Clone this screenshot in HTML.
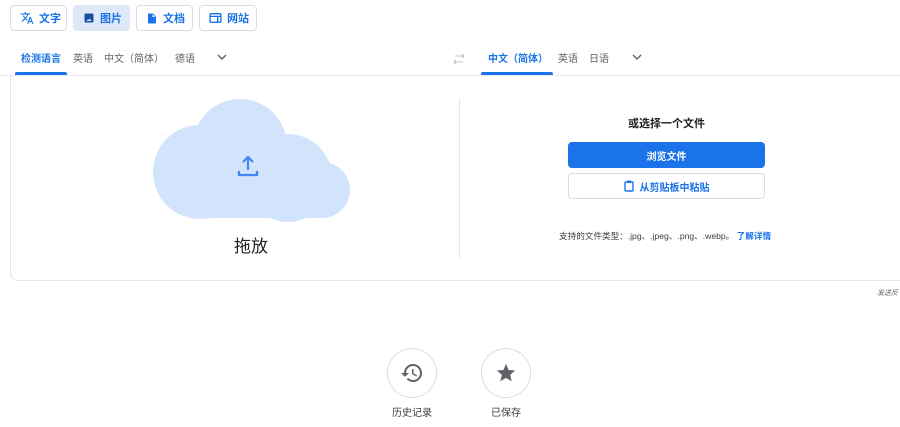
<!DOCTYPE html>
<html><head><meta charset="utf-8"><style>
*{box-sizing:border-box;margin:0;padding:0}
body{width:900px;height:427px;overflow:hidden;background:#fff;font-family:"Liberation Sans","Noto Sans CJK SC",sans-serif;color:#3c4043;position:relative}
.btn{position:absolute;top:5px;height:26px;border:1px solid #dadce0;border-radius:4px;font-size:11px;color:#1a73e8;display:flex;align-items:center;padding-left:9px;gap:5px;font-weight:bold}
.btn.sel{background:#dde8f9;border-color:#dde8f9}
.tab{position:absolute;top:50px;font-size:10px;color:#5f6368}
.abs{position:absolute}
</style></head><body>
<div class="btn" style="left:10px;width:57px"><svg width="14" height="14" viewBox="0 0 24 24"><path fill="#1a73e8" d="M12.9 15.1l-2.5-2.5v0c1.7-1.9 3-4.1 3.7-6.5H17V4h-7V2H8v2H1v2h11.2c-.7 1.9-1.7 3.8-3.2 5.3-1-1.1-1.8-2.3-2.4-3.6h-2c.7 1.6 1.7 3.200 3 4.6L2.6 17.3 4 18.7l5-5 3.1 3.1.8-1.7zM18.5 10h-2L12 22h2l1.1-3h4.8l1.1 3h2l-4.5-12zm-2.6 7l1.6-4.3 1.6 4.3h-3.2z"/></svg>文字</div>
<div class="btn sel" style="left:73px;width:57px"><svg width="12" height="12" viewBox="0 0 24 24"><path fill="#1a4f9e" d="M21 19V5c0-1.1-.9-2-2-2H5c-1.1 0-2 .9-2 2v14c0 1.1.9 2 2 2h14c1.1 0 2-.9 2-2zM8 15l2 2 3-4 4 5H7z"/></svg>图片</div>
<div class="btn" style="left:136px;width:57px"><svg width="12" height="13" viewBox="0 0 24 24"><path fill="#1a73e8" d="M14 2H6c-1.1 0-2 .9-2 2v16c0 1.1.9 2 2 2h12c1.1 0 2-.9 2-2V8l-6-6zm-1 7V3.5L18.5 9H13z"/></svg>文档</div>
<div class="btn" style="left:199px;width:58px"><svg width="13" height="12" viewBox="0 0 24 22"><rect x="2" y="3" width="20" height="16" rx="2" fill="none" stroke="#1a73e8" stroke-width="2.5"/><path d="M2 8h20M16 8v11" stroke="#1a73e8" stroke-width="2.5"/></svg>网站</div>

<div class="tab" style="left:21px;color:#1a73e8;font-weight:bold">检测语言</div>
<div class="abs" style="left:15px;top:72px;width:52px;height:3px;background:#1a73e8;border-radius:2px 2px 0 0"></div>
<div class="tab" style="left:73px">英语</div>
<div class="tab" style="left:104px">中文（简体）</div>
<div class="tab" style="left:175px">德语</div>
<svg class="abs" style="left:216px;top:52px" width="12" height="10" viewBox="0 0 12 10"><path d="M2 3l4 4 4-4" fill="none" stroke="#5f6368" stroke-width="1.4"/></svg>
<svg class="abs" style="left:452px;top:53px" width="14" height="12" viewBox="0 0 14 12"><path d="M3 3h9M10 1l2 2-2 2M11 9H2M4 7L2 9l2 2" fill="none" stroke="#bdc1c6" stroke-width="1"/></svg>
<div class="tab" style="left:488px;color:#1a73e8;font-weight:bold">中文（简体）</div>
<div class="abs" style="left:481px;top:72px;width:72px;height:3px;background:#1a73e8;border-radius:2px 2px 0 0"></div>
<div class="tab" style="left:558px">英语</div>
<div class="tab" style="left:589px">日语</div>
<svg class="abs" style="left:631px;top:52px" width="12" height="10" viewBox="0 0 12 10"><path d="M2 3l4 4 4-4" fill="none" stroke="#5f6368" stroke-width="1.4"/></svg>
<div class="abs" style="left:0;top:75px;width:900px;height:1px;background:#e8eaed"></div>

<div class="abs" style="left:10px;top:75px;width:900px;height:206px;border:1px solid #e3e5e8;border-top:none;border-radius:0 0 8px 8px"></div>

<svg class="abs" style="left:0;top:0" width="460" height="280">
<g fill="#d2e3fc"><circle cx="240" cy="146" r="47"/><circle cx="200" cy="172" r="47"/><circle cx="288" cy="178" r="44"/><circle cx="322" cy="190" r="28"/><rect x="200" y="170" width="122" height="48"/></g>
<path d="M248 170v-12M243 162l5-5 5 5M239 171v4h18v-4" fill="none" stroke="#4285f4" stroke-width="2.2"/>
</svg>
<div class="abs" style="left:234px;top:232px;font-size:17px;color:#202124">拖放</div>
<div class="abs" style="left:459px;top:98px;width:1px;height:160px;background:#e3e5e8"></div>

<div class="abs" style="left:628px;top:115px;font-size:11px;font-weight:bold;color:#202124">或选择一个文件</div>
<div class="abs" style="left:568px;top:142px;width:197px;height:26px;background:#1a73e8;border-radius:4px;color:#fff;font-size:10px;font-weight:bold;display:flex;align-items:center;justify-content:center">浏览文件</div>
<div class="abs" style="left:568px;top:173px;width:197px;height:26px;border:1px solid #dadce0;border-radius:4px;color:#1a73e8;font-size:10px;font-weight:bold;display:flex;align-items:center;justify-content:center;gap:6px"><svg width="10" height="12" viewBox="0 0 10 12"><rect x="1" y="2" width="8" height="9" rx="1" fill="none" stroke="#1a73e8" stroke-width="1.4"/><rect x="3" y="0.5" width="4" height="2.5" fill="#1a73e8"/></svg>从剪贴板中粘贴</div>
<div class="abs" style="left:559px;top:230px;font-size:8.6px;color:#3c4043;white-space:nowrap">支持的文件类型：.jpg、.jpeg、.png、.webp。 <span style="color:#1a73e8;font-weight:bold">了解详情</span></div>
<div class="abs" style="left:877px;top:288px;font-size:7px;font-style:italic;color:#5f6368">发送反</div>

<div class="abs" style="left:387px;top:348px;width:50px;height:50px;border:1px solid #dadce0;border-radius:50%"></div>
<svg class="abs" style="left:400px;top:361px" width="24" height="24" viewBox="0 0 24 24"><path fill="#5f6368" d="M13 3a9 9 0 0 0-9 9H1l3.9 3.9L9 12H6c0-3.9 3.1-7 7-7s7 3.1 7 7-3.1 7-7 7c-1.9 0-3.7-.8-4.9-2.1l-1.4 1.4C8.3 20 10.5 21 13 21a9 9 0 0 0 0-18zm-1 5v5l4.3 2.5.7-1.2-3.5-2.1V8z"/></svg>
<div class="abs" style="left:392px;top:404px;font-size:10px;color:#3c4043">历史记录</div>
<div class="abs" style="left:481px;top:348px;width:50px;height:50px;border:1px solid #dadce0;border-radius:50%"></div>
<svg class="abs" style="left:495px;top:362px" width="22" height="22" viewBox="0 0 24 24"><path fill="#5f6368" d="M12 17.3l6.2 3.7-1.6-7 5.4-4.7-7.2-.6L12 2 9.2 8.7 2 9.3l5.5 4.7-1.7 7z"/></svg>
<div class="abs" style="left:491px;top:404px;font-size:10px;color:#3c4043">已保存</div>
</body></html>
